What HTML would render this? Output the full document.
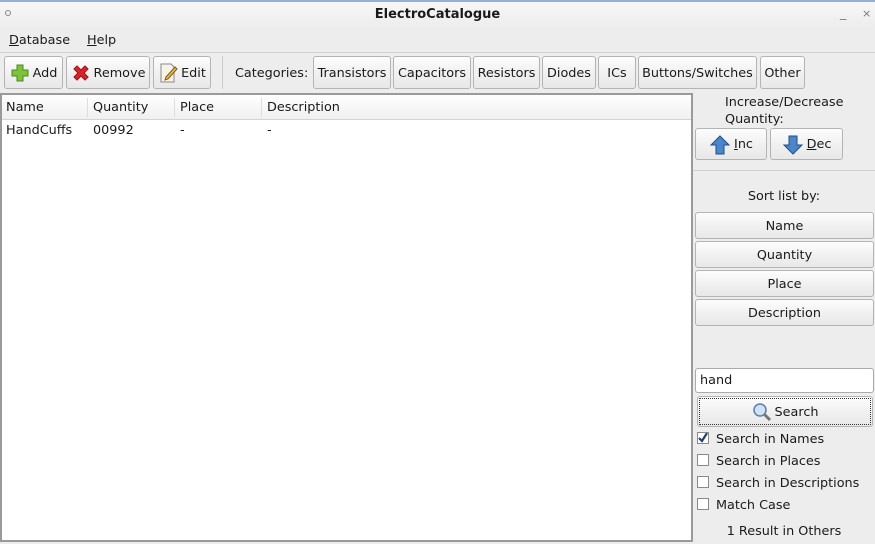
<!DOCTYPE html>
<html><head><style>
*{box-sizing:border-box;margin:0;padding:0}
body{width:875px;height:544px;background:#ededed;font-family:"DejaVu Sans","Liberation Sans",sans-serif;font-size:12.8px;color:#1a1a1a;position:relative;overflow:hidden}
.a{position:absolute;white-space:nowrap}
.btn{position:absolute;border:1px solid #b4b4b4;border-radius:3px;background:linear-gradient(#fdfdfd,#f1f1f1 50%,#e8e8e8);display:flex;align-items:center;justify-content:center;gap:3px;padding-top:1px}
.cb{position:absolute;left:697px;width:12px;height:12px;border:1px solid #8a8a8a;background:#fff}
</style></head><body>
<div class="a" style="left:0;top:0;width:875px;height:2px;background:#8fb2d9"></div>
<div class="a" style="left:0;top:2px;width:875px;height:28px;background:linear-gradient(#f7f7f7,#ececec)"></div>
<div class="a" style="left:5px;top:10px;width:6px;height:6px;border:1px solid #888;border-radius:50%"></div>
<div class="a" style="left:0;width:875px;top:7px;text-align:center;font-weight:bold;font-size:13px">ElectroCatalogue</div>
<div class="a" style="left:840px;top:6px;color:#777">_</div>
<div class="a" style="left:862px;top:7px;color:#777;font-size:11px">×</div>
<div class="a" style="left:9px;top:33px"><u>D</u>atabase</div>
<div class="a" style="left:87px;top:33px"><u>H</u>elp</div>
<div class="a" style="left:0;top:52px;width:875px;height:1px;background:#cfcfcf"></div>
<div class="btn" style="left:4px;top:56px;width:59px;height:33px"><svg width="20" height="20" viewBox="0 0 20 20"><path d="M7 2h6v5h5v6h-5v5H7v-5H2V7h5z" fill="#7cc23a" stroke="#4b8a1d"/></svg>Add</div>
<div class="btn" style="left:66px;top:56px;width:84px;height:33px"><svg width="20" height="20" viewBox="0 0 20 20"><path d="M3 6l3-3 4 4 4-4 3 3-4 4 4 4-3 3-4-4-4 4-3-3 4-4z" fill="#d8252a" stroke="#9a1015"/></svg>Remove</div>
<div class="btn" style="left:153px;top:56px;width:58px;height:33px"><svg width="20" height="22" viewBox="0 0 20 22"><path d="M3 2h10l3 3v15H3z" fill="#f6f3e8" stroke="#888"/><path d="M8 15l9-10 2 2-9 10-3 1z" fill="#e8b84a" stroke="#7a5a20"/></svg>Edit</div>
<div class="a" style="left:222px;top:56px;width:1px;height:33px;background:#ccc"></div>
<div class="a" style="left:235px;top:66px">Categories:</div>
<div class="btn" style="left:313px;top:56px;width:78px;height:33px">Transistors</div>
<div class="btn" style="left:393px;top:56px;width:78px;height:33px">Capacitors</div>
<div class="btn" style="left:473px;top:56px;width:67px;height:33px">Resistors</div>
<div class="btn" style="left:542px;top:56px;width:54px;height:33px">Diodes</div>
<div class="btn" style="left:598px;top:56px;width:38px;height:33px">ICs</div>
<div class="btn" style="left:638px;top:56px;width:119px;height:33px">Buttons/Switches</div>
<div class="btn" style="left:760px;top:56px;width:45px;height:33px">Other</div>
<div class="a" style="left:0;top:93px;width:693px;height:449px;border:2px solid #9a9a9a;background:#fff"></div>
<div class="a" style="left:2px;top:95px;width:689px;height:25px;background:linear-gradient(#fff,#f0f0f0);border-bottom:1px solid #d4d4d4"></div>
<div class="a" style="left:87px;top:98px;width:1px;height:19px;background:#ddd"></div>
<div class="a" style="left:174px;top:98px;width:1px;height:19px;background:#ddd"></div>
<div class="a" style="left:261px;top:98px;width:1px;height:19px;background:#ddd"></div>
<div class="a" style="left:6px;top:100px">Name</div>
<div class="a" style="left:93px;top:100px">Quantity</div>
<div class="a" style="left:180px;top:100px">Place</div>
<div class="a" style="left:267px;top:100px">Description</div>
<div class="a" style="left:6px;top:123px">HandCuffs</div>
<div class="a" style="left:93px;top:123px">00992</div>
<div class="a" style="left:180px;top:123px">-</div>
<div class="a" style="left:267px;top:123px">-</div>
<div class="a" style="left:725px;top:95px">Increase/Decrease</div>
<div class="a" style="left:725px;top:112px">Quantity:</div>
<div class="btn" style="left:695px;top:128px;width:72px;height:32px"><svg width="22" height="22" viewBox="0 0 22 22"><path d="M11 2l9 9h-5v9H7v-9H2z" fill="#4a86c8" stroke="#1f4f8a"/></svg><span><u>I</u>nc</span></div>
<div class="btn" style="left:770px;top:128px;width:73px;height:32px"><svg width="22" height="22" viewBox="0 0 22 22"><path d="M11 20l9-9h-5V2H7v9H2z" fill="#4a86c8" stroke="#1f4f8a"/></svg><span><u>D</u>ec</span></div>
<div class="a" style="left:693px;top:170px;width:182px;height:1px;background:#cfcfcf"></div>
<div class="a" style="left:693px;width:182px;top:189px;text-align:center">Sort list by:</div>
<div class="btn" style="left:695px;top:212px;width:179px;height:27px">Name</div>
<div class="btn" style="left:695px;top:241px;width:179px;height:27px">Quantity</div>
<div class="btn" style="left:695px;top:270px;width:179px;height:27px">Place</div>
<div class="btn" style="left:695px;top:299px;width:179px;height:27px">Description</div>
<div class="a" style="left:695px;top:368px;width:179px;height:25px;border:1px solid #aaa;border-radius:3px;background:#fff;padding:4px 0 0 4px">hand</div>
<div class="btn" style="left:697px;top:396px;width:176px;height:31px;outline:1px dotted #333;outline-offset:-3px"><svg width="20" height="20" viewBox="0 0 20 20"><circle cx="8" cy="8" r="6" fill="#cfe3f5" stroke="#5a7fa6" stroke-width="1.5"/><path d="M12 12l6 6" stroke="#777" stroke-width="3"/></svg>Search</div>
<div class="cb" style="top:432px;background:#fff"><svg width="10" height="10" viewBox="0 0 10 10" style="display:block"><path d="M1 5l3 3 5-8" stroke="#1f3f70" stroke-width="2.2" fill="none"/></svg></div>
<div class="a" style="left:716px;top:432px">Search in Names</div>
<div class="cb" style="top:454px"></div>
<div class="a" style="left:716px;top:454px">Search in Places</div>
<div class="cb" style="top:476px"></div>
<div class="a" style="left:716px;top:476px">Search in Descriptions</div>
<div class="cb" style="top:498px"></div>
<div class="a" style="left:716px;top:498px">Match Case</div>
<div class="a" style="left:693px;width:182px;top:524px;text-align:center">1 Result in Others</div>
</body></html>
